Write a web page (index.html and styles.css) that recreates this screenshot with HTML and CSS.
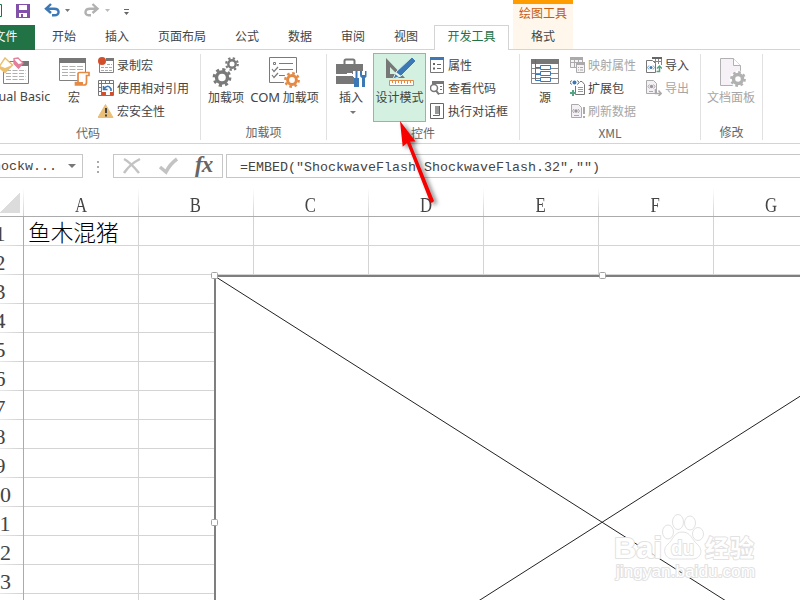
FILE: index.html
```
<!DOCTYPE html>
<html lang="zh-CN">

<head>
    <meta charset="utf-8">
    <meta name="viewport" content="width=device-width, initial-scale=1.0">
    <title>Excel - 开发工具</title>
    <link rel="stylesheet" href="styles.css">
</head>

<body>
    <header class="titlebar">
        <div class="quick">
            <svg width="135" height="25" viewBox="0 0 135 25">
                <path d="M-5 4.5H1.5V16.5H-5" fill="none" stroke="#217346" />
                <path d="M16 4H30V18H16Z" fill="#8250a8" />
                <path d="M19 5h8v5h-8zM19 13h8v4h-8z" fill="#fff" />
                <path d="M21 14h2v3h-2z" fill="#8250a8" />
                <path d="M51 4L46 8.700L51 13M46.500 8.700H54C60 8.700 60 15.300 54.500 15.300H52" fill="none" stroke="#3c78b5" stroke-width="2.400" />
                <path d="M65 9h5l-2.500 3z" fill="#777" />
                <path d="M92.500 4L97.500 8.700L92.500 13M97 8.700H90C84 8.700 84.500 15.300 88.500 15.300H91" fill="none" stroke="#b1b1b1" stroke-width="2.400" />
                <path d="M105 9h5l-2.500 3z" fill="#bbb" />
                <path d="M124 9h5v1h-5zM124 12h5l-2.500 3z" fill="#666" />
            </svg>
        </div>
        <div class="context-title">绘图工具</div>
    </header>

    <nav class="tabs">
        <a class="tab file">文件</a>
        <a class="tab">开始</a>
        <a class="tab">插入</a>
        <a class="tab">页面布局</a>
        <a class="tab">公式</a>
        <a class="tab">数据</a>
        <a class="tab">审阅</a>
        <a class="tab">视图</a>
        <a class="tab active">开发工具</a>
        <a class="tab context">格式</a>
    </nav>

    <section class="ribbon">
        <div class="group code">
            <div class="tools">
                <div class="big vb">
                    <svg width="32" height="32" viewBox="0 0 32 32">
                        <path d="M4.500 4.500H29.500V26.500H4.500Z" fill="#fff" stroke="#808080" />
                        <path d="M22 4h8v5h-8z" fill="#777" />
                        <path d="M7 13.500h20M7 16.500h20M7 19.500h20M7 22.500h20" stroke="#b0b0b0" stroke-dasharray="5 1.500" />
                        <path d="M6 1L13.500 8L6 15.500L0 10Z" fill="#fff" stroke="#eabf70" stroke-width="1.500" />
                        <path d="M0 8.500L6 11L13.500 8L6 16L0 11Z" fill="#eabf70" />
                        <path d="M19 1L24 6L19.500 11L15 6.500V1.500Z" fill="#fff" stroke="#e3809b" stroke-width="1.300" />
                        <path d="M15 2L19.500 7L24 6L19.500 12L15 7Z" fill="#e3809b" />
                    </svg>
                    <span>Visual Basic</span>
                </div>
                <div class="big macro">
                    <svg width="32" height="32" viewBox="0 0 32 32">
                        <path d="M1.500 2.500H27.500V23.500H1.500Z" fill="#fff" stroke="#808080" />
                        <path d="M1 1h27v5H1z" fill="#777" />
                        <path d="M4 9.500h21M4 12.500h21M4 15.500h14M4 18.500h14" stroke="#b0b0b0" stroke-dasharray="6 1.500" />
                        <path d="M20 16.500Q20 15.500 21.500 15.500H31V18.500H28.500V25.500Q28.500 28 26 28H17.500V25.500H20Z" fill="#fff" stroke="#e48a44" stroke-width="1.700" />
                        <path d="M17 25h8v3h-8z" fill="#e48a44" />
                    </svg>
                    <span>宏</span>
                </div>
                <div class="small-col code-col">
                    <div class="small">
                        <svg width="16" height="16" viewBox="0 0 16 16">
                            <path d="M1.500 4V15.500H15.500V1.500H8" fill="none" stroke="#808080" />
                            <path d="M8 1h8v3H8z" fill="#777" />
                            <path d="M3 10.500h11M3 13.500h11M9 7.500h5" stroke="#aaa" stroke-dasharray="3 1" />
                            <circle cx="4" cy="4" r="4" fill="#d24f2b" />
                        </svg>
                        <span>录制宏</span>
                    </div>
                    <div class="small">
                        <svg width="16" height="16" viewBox="0 0 16 16">
                            <path d="M.500 .500H15.500V15.500H.500ZM3.500 0V16M.500 3.500H15.500M7.500 0V4M11.500 0V4M0 7.500H4M0 11.500H4M7.500 12V16" fill="none" stroke="#777" />
                            <path d="M4 12h3v3H4zM12 12h3v3h-3z" fill="#d24f2b" />
                            <path d="M5.500 6V9.500H9.500M6 9Q10 3.500 13 9V11" fill="none" stroke="#3c78b5" stroke-width="1.600" />
                        </svg>
                        <span>使用相对引用</span>
                    </div>
                    <div class="small">
                        <svg width="16" height="16" viewBox="0 0 16 16">
                            <path d="M7.500 1.500L15 14.500H0Z" fill="#eabf77" stroke="#eabf77" />
                            <path d="M7 5h2v5H7zM7 11.500h2v2H7z" fill="#444" />
                        </svg>
                        <span>宏安全性</span>
                    </div>
                </div>
            </div>
            <div class="label">代码</div>
        </div>

        <div class="group addins">
            <div class="tools">
                <div class="big addin">
                    <svg width="32" height="32" viewBox="0 0 32 32">
                        <circle cx="12" cy="20.500" r="5.500" fill="none" stroke="#7a7a7a" stroke-width="3.400" />
                        <circle cx="12" cy="20.500" r="8" fill="none" stroke="#7a7a7a" stroke-width="2.800" stroke-dasharray="3.142 3.142" />
                        <circle cx="22" cy="7" r="3.700" fill="none" stroke="#7a7a7a" stroke-width="2.400" />
                        <circle cx="22" cy="7" r="5.800" fill="none" stroke="#7a7a7a" stroke-width="2.200" stroke-dasharray="2.278 2.278" />
                    </svg>
                    <span>加载项</span>
                </div>
                <div class="big com">
                    <svg width="32" height="32" viewBox="0 0 32 32">
                        <path d="M.500 .500H27.500V25.500H.500Z" fill="#fff" stroke="#7a7a7a" />
                        <path d="M4.500 5.500h2v2h-2zM10 6.500h14M10 12.500h14M10 18.500h6" fill="none" stroke="#7a7a7a" />
                        <path d="M3 12l2 2.500l4-4.500M3 18l2 2.500l4-4.500" fill="none" stroke="#7a7a7a" stroke-width="1.200" />
                        <circle cx="23" cy="23" r="8.500" fill="#fff" />
                        <circle cx="23" cy="23" r="4.400" fill="#fff" stroke="#e48a44" stroke-width="3" />
                        <circle cx="23" cy="23" r="6.700" fill="none" stroke="#e48a44" stroke-width="2.400" stroke-dasharray="2.630 2.630" />
                    </svg>
                    <span><b class="latin">COM</b> 加载项</span>
                </div>
            </div>
            <div class="label">加载项</div>
        </div>

        <div class="group controls">
            <div class="tools">
                <div class="big insert">
                    <svg width="32" height="32" viewBox="0 0 32 32">
                        <path d="M9.500 7V4Q9.500 2.500 11 2.500H18Q19.500 2.500 19.500 4V7" fill="none" stroke="#777" stroke-width="2" />
                        <path d="M1 7H28V17H1ZM1 19H28V27H1Z" fill="#777" />
                        <path d="M12 16h5v3h-5z" fill="#fff" />
                        <path d="M18 14h14v16H19V20h-1z" fill="#fff" />
                        <path d="M20.500 14h2v7h-2zM19 21h5v9h-5z" fill="#3c78b5" />
                        <path d="M25 14V18Q25 20.500 27 21V30H30V21Q32 20.500 31.500 18V14H30V18H27V14Z" fill="#3c78b5" />
                    </svg>
                    <span>插入</span>
                    <i class="caret"></i>
                </div>
                <div class="big design">
                    <svg width="32" height="32" viewBox="0 0 32 32">
                        <path d="M2 1L21 21H2ZM6 10V17H13Z" fill="#777" fill-rule="evenodd" />
                        <path d="M28 0L32 4L17 19L9 22L12 15Z" fill="#3c78b5" stroke="#d3f0e0" />
                        <path d="M12 15L17 19L15 20L11 17Z" fill="#eaf6ef" />
                        <path d="M5.500 23.500H29.500V28.500H5.500Z" fill="#fff" stroke="#e48a44" />
                        <path d="M8.500 24v2M11.500 24v3M14.500 24v2M17.500 24v3M20.500 24v2M23.500 24v3M26.500 24v2" stroke="#e48a44" />
                    </svg>
                    <span>设计模式</span>
                </div>
                <div class="small-col ctl-col">
                    <div class="small">
                        <svg width="16" height="16" viewBox="0 0 16 16">
                            <path d="M.500 .500H13.500V15.500H.500Z" fill="#fff" stroke="#777" />
                            <path d="M0 0h14v3H0z" fill="#3c78b5" />
                            <path d="M3 6h2v2H3zM3 10.500h2v2H3z" fill="#666" />
                            <path d="M7 7.500h4M7 11.500h4" stroke="#666" />
                        </svg>
                        <span>属性</span>
                    </div>
                    <div class="small">
                        <svg width="16" height="16" viewBox="0 0 16 16">
                            <path d="M2.500 4V1.500H13.500V13.500H8" fill="none" stroke="#777" />
                            <path d="M2 1h12v3H2zM10 6h2v1h-2zM10 9h2v1h-2z" fill="#777" />
                            <circle cx="4" cy="8" r="3.500" fill="#fff" stroke="#777" stroke-width="1.500" />
                            <path d="M6 10.500L9 14.500" stroke="#777" stroke-width="2" />
                        </svg>
                        <span>查看代码</span>
                    </div>
                    <div class="small">
                        <svg width="16" height="16" viewBox="0 0 16 16">
                            <path d="M.500 .500H13.500V15.500H.500Z" fill="#fff" stroke="#666" />
                            <path d="M5 3h5v8H5z" fill="#999" />
                            <path d="M3 12.500H9.500V3" fill="none" stroke="#666" />
                        </svg>
                        <span>执行对话框</span>
                    </div>
                </div>
            </div>
            <div class="label">控件</div>
        </div>

        <div class="group xml">
            <div class="tools">
                <div class="big source">
                    <svg width="32" height="32" viewBox="0 0 32 32">
                        <path d="M2.500 2.500H29.500V26.500H2.500ZM2 11.500h28M2 16.500h28M2 21.500h28" fill="#fff" stroke="#888" />
                        <path d="M2 2h28v5H2z" fill="#777" />
                        <path d="M6.500 2V23.500H11M6.500 10.500H11M6.500 17.500H11" fill="none" stroke="#3c78b5" />
                        <path d="M11.500 8.500h10v4h-10zM11.500 14.500h10v4h-10zM11.500 20.500h10v4h-10z" fill="#fff" stroke="#3c78b5" />
                    </svg>
                    <span>源</span>
                </div>
                <div class="small-col xml-col">
                    <div class="small off">
                        <svg width="16" height="16" viewBox="0 0 16 16">
                            <path d="M.500 .500H12.500V10.500H.500ZM.500 5.500H12M4.500 3V10M8.500 3V10" fill="#f5f3f5" stroke="#aaa" />
                            <path d="M0 0h13v3H0z" fill="#aaa" />
                            <path d="M6.500 6.500H14.500V15.500H6.500Z" fill="#f5f3f5" stroke="#aaa" />
                            <path d="M6 5h9v3H6zM8 10h1v1H8zM10 10h3v1h-3zM8 12.500h1v1H8zM10 12.500h3v1h-3z" fill="#aaa" />
                        </svg>
                        <span>映射属性</span>
                    </div>
                    <div class="small">
                        <svg width="16" height="16" viewBox="0 0 16 16">
                            <path d="M10 1.500H12L14.500 4.500V14.500H5.500V6" fill="#fff" stroke="#777" />
                            <path d="M8 7.500h5M8 9.500h5M8 11.500h5" stroke="#999" />
                            <circle cx="4.500" cy="2.500" r="2" fill="#3c78b5" />
                            <path d="M1.500 .500L0 2.500L1.500 4.500M7.500 .500L9 2.500L7.500 4.500" fill="none" stroke="#555" />
                            <path d="M2 10h2v2h2v2H4v2H2v-2H0v-2h2z" fill="#55a584" />
                        </svg>
                        <span>扩展包</span>
                    </div>
                    <div class="small off">
                        <svg width="16" height="16" viewBox="0 0 16 16">
                            <path d="M1.500 1.500H8.500L11.500 4.500V14.500H1.500Z" fill="#f5f0f5" stroke="#aaa" />
                            <circle cx="6" cy="8" r="1.700" fill="#999" />
                            <path d="M4 6L2.500 8L4 10M8 6L9.500 8L8 10M4 12.500h5" fill="none" stroke="#aaa" />
                            <path d="M12 4h3v8h-3z" fill="#fff" />
                            <path d="M13 4h2v7h-2zM13 13h2v2h-2z" fill="#aaa" />
                        </svg>
                        <span>刷新数据</span>
                    </div>
                </div>
                <div class="small-col io-col">
                    <div class="small">
                        <svg width="16" height="16" viewBox="0 0 16 16">
                            <path d="M6.500 .500H15.500V8M7 4.500H15M9.500 2V7M12.500 2V7" fill="none" stroke="#888" />
                            <path d="M6 0h10v2H6z" fill="#666" />
                            <path d="M.500 3.500H6.500L9.500 6.500V15.500H.500Z" fill="#fff" stroke="#777" />
                            <circle cx="5" cy="10.500" r="1.500" fill="#3c78b5" />
                            <path d="M3 8.500L1.500 10.500L3 12.500M7 8.500L8.500 10.500L7 12.500" fill="none" stroke="#7b9fc4" />
                            <path d="M10.500 14.500H13.500V9.500M11 11.500L13.500 9L16 11.500" fill="none" stroke="#55a584" stroke-width="1.500" />
                        </svg>
                        <span>导入</span>
                    </div>
                    <div class="small off">
                        <svg width="16" height="16" viewBox="0 0 16 16">
                            <path d="M.500 .500H7.500L10.500 3.500V13.500H.500Z" fill="#f5f0f5" stroke="#aaa" />
                            <circle cx="5.500" cy="6.500" r="1.700" fill="#999" />
                            <path d="M3.500 4.500L2 6.500L3.500 8.500M7.500 4.500L9 6.500L7.500 8.500M3 11.500h4" fill="none" stroke="#aaa" />
                            <path d="M9.500 9V13.500H15M12.500 10.500L15.200 13.500L12.500 16" fill="none" stroke="#aaa" stroke-width="1.500" />
                        </svg>
                        <span>导出</span>
                    </div>
                </div>
            </div>
            <div class="label">XML</div>
        </div>

        <div class="group modify">
            <div class="tools">
                <div class="big panel off">
                    <svg width="32" height="32" viewBox="0 0 32 32">
                        <path d="M5.500 1.500H18.500L25.500 8.500V28.500H5.500Z" fill="#f6f1f6" stroke="#b1b1b1" />
                        <path d="M18.500 1.500V8.500H25.500" fill="#fff" stroke="#b1b1b1" />
                        <circle cx="23" cy="22" r="8.500" fill="#fff" />
                        <circle cx="23" cy="22" r="4.500" fill="#fff" stroke="#b1b1b1" stroke-width="3.400" />
                        <circle cx="23" cy="22" r="6.800" fill="none" stroke="#b1b1b1" stroke-width="2.200" stroke-dasharray="2.670 2.670" />
                    </svg>
                    <span>文档面板</span>
                </div>
            </div>
            <div class="label">修改</div>
        </div>
    </section>

    <section class="formula-bar">
        <div class="name-box"><span>Shockw...</span><i class="caret"></i></div>
        <div class="dots"><i></i><i></i><i></i></div>
        <div class="fx-box">
            <svg width="70" height="22" viewBox="0 0 70 22">
                <path d="M10 4Q16 7 25 18M26 4Q16 9 10 18" fill="none" stroke="#c3c3c3" stroke-width="2.500" />
                <path d="M46 12L52 17Q56 9 63 4" fill="none" stroke="#c3c3c3" stroke-width="3.500" />
            </svg>
            <em>fx</em>
        </div>
        <div class="formula">=EMBED("ShockwaveFlash.ShockwaveFlash.32","")</div>
    </section>

    <main class="sheet">
        <div class="grid" id="grid">
            <div class="corner"></div>
        </div>

        <!-- Flash control in design mode -->
        <svg class="object" width="590" height="330" viewBox="210 270 590 330">
            <path d="M215 276H989V768H215Z" fill="#fff" stroke="#7f7f7f" stroke-width="2" />
            <path d="M216 277L989 768M989 276L216 768" stroke="#222" stroke-width="1" />
            <g fill="#fff" stroke="#a3a3a3">
                <rect x="211.500" y="272.500" width="6" height="6" rx="1" />
                <rect x="599.500" y="272.500" width="6" height="6" rx="1" />
                <rect x="211.500" y="519.500" width="6" height="6" rx="1" />
            </g>
        </svg>

        <svg class="watermark" width="160" height="80" viewBox="605 508 160 80">
            <g fill="#fff" fill-opacity=".85" stroke="#e2e2e2">
                <ellipse cx="668" cy="532" rx="5.500" ry="7" />
                <ellipse cx="678" cy="522" rx="5.500" ry="7.500" />
                <ellipse cx="690" cy="523" rx="5.500" ry="7" />
                <ellipse cx="698" cy="534" rx="5.500" ry="6.500" />
                <path d="M682 532C674 532 673 540 668 544C661 550 666 560 674 559H692C701 559 704 550 697 544C692 540 691 532 682 532Z" />
            </g>
            <g class="wm-text">
                <text x="614" y="558" font-size="30" textLength="48" lengthAdjust="spacingAndGlyphs" class="wm-bold">Bai</text>
                <text x="671" y="555" font-size="21" textLength="23" lengthAdjust="spacingAndGlyphs" class="wm-bold">du</text>
                <text x="705" y="557" font-size="24" textLength="49" class="wm-bold">经验</text>
                <text x="616" y="577" font-size="16" textLength="139" lengthAdjust="spacingAndGlyphs" class="wm-url">jingyan.baidu.com</text>
            </g>
        </svg>
    </main>

    <svg class="pointer" width="60" height="100" viewBox="390 110 60 100">
        <path d="M400 121L415.500 141.500L410 141.500L434 201Q432 204 430 202L407 143L402.700 146.700Z" fill="#f60000" />
    </svg>

    <script>
        const grid = document.querySelector("#grid");
        const letters = ["A", "B", "C", "D", "E", "F", "G"];

        function addCell(className, text) {
            const cell = document.createElement("div");
            cell.className = className;
            if (text) {
                const span = document.createElement("span");
                span.textContent = text;
                cell.appendChild(span);
            }
            grid.appendChild(cell);
        }

        letters.forEach(letter => addCell("col-head", letter));

        for (let row = 1; row <= 14; row++) {
            addCell("row-head", String(row));
            letters.forEach(letter => {
                addCell("cell", row === 1 && letter === "A" ? "鱼木混猪" : "");
            });
        }

    </script>
</body>

</html>
```
FILE: styles.css
```
* {
    box-sizing: border-box;
}

body {
    margin: 0;
    width: 800px;
    height: 600px;
    overflow: hidden;
    position: relative;
    background-color: #fff;
    color: #444;
    font-family: "Noto Sans CJK SC", sans-serif;
    font-size: 12px;
    line-height: 16px;
}

svg {
    display: block;
    flex: none;
}

.titlebar {
    display: flex;
    height: 25px;
}

.quick {
    width: 513px;
}

.context-title {
    width: 60px;
    border-top: 4px solid #ff9c00;
    background-color: #fff7eb;
    color: #c55a11;
    text-align: center;
    line-height: 17px;
}

/* tabs */
.tabs {
    display: flex;
    height: 25px;
    margin-left: -24px;
    border-bottom: 1px solid #d4d4d4;
}

.tab {
    padding: 0 14.5px;
    height: 24px;
    line-height: 22px;
    white-space: nowrap;
}

.file {
    width: 59px;
    height: 25px;
    margin-right: 2.5px;
    padding: 0;
    text-align: center;
    background-color: #217346;
    color: #fff;
}

.active {
    width: 75px;
    height: 25px;
    margin-left: 1.5px;
    padding: 0;
    text-align: center;
    border: 1px solid #d4d4d4;
    border-bottom: none;
    background-color: #fff;
    color: #217346;
    line-height: 20px;
}

.context {
    width: 60px;
    margin-left: 4px;
    padding: 0;
    text-align: center;
    background-color: #fff7eb;
}

/* ribbon */
.ribbon {
    display: flex;
    height: 94px;
    margin-left: -24px;
    padding-top: 3px;
    border-bottom: 1px solid #d4d4d4;
}

.group {
    flex: none;
    display: flex;
    flex-direction: column;
    height: 86px;
    margin-top: 1px;
    border-right: 1px solid #e1e1e1;
}

.code {
    width: 225px;
}

.addins {
    width: 126px;
}

.controls {
    width: 193px;
}

.xml {
    width: 181px;
}

.modify {
    width: 62px;
}

.tools {
    display: flex;
    height: 69px;
    margin-top: -1px;
}

.label {
    padding-top: 3px;
    text-align: center;
    color: #666;
}

.big {
    display: flex;
    flex-direction: column;
    align-items: center;
    padding-top: 4px;
    white-space: nowrap;
}

.vb {
    width: 78px;
}

.vb span {
    margin-right: -2px;
    font-family: "Noto Sans", sans-serif;
    font-size: 12.5px;
}

.macro {
    width: 40px;
}

.addin {
    width: 50px;
}

.com {
    width: 67px;
}

.latin {
    font-family: "Noto Sans", sans-serif;
    font-size: 13px;
    font-weight: normal;
}

.insert {
    width: 46px;
}

.insert svg {
    margin-left: 2px;
}

.insert span {
    margin-left: 2px;
}

.insert .caret {
    margin: 6px 0 0 6px;
}

.design {
    width: 53px;
    padding-top: 3px;
    border: 1px solid #86bfa0;
    background-color: #d3f0e0;
}

.source {
    width: 50px;
}

.panel {
    width: 60px;
}

.small {
    display: flex;
    align-items: center;
    height: 23px;
    gap: 3px;
    white-space: nowrap;
}

.code-col {
    margin-left: 4px;
}

.ctl-col {
    margin-left: 4px;
}

.ctl-col .small {
    gap: 2px;
}

.xml-col .small {
    gap: 2px;
}

.io-col {
    margin-left: 10px;
}

.off {
    color: #a6a6a6;
}

.caret {
    border: 3px solid transparent;
    border-top: 3px solid #777;
    border-bottom: none;
}

/* formula bar */
.formula-bar {
    display: flex;
    height: 44px;
    padding-top: 10px;
    font-family: "Liberation Mono", monospace;
    font-size: 13.33px;
}

.name-box,
.fx-box,
.formula {
    height: 24px;
    border: 1px solid #c6c6c6;
    line-height: 25px;
}

.name-box {
    display: flex;
    align-items: center;
    width: 99px;
    margin-left: -16px;
}

.name-box span {
    width: 83px;
}

.name-box .caret {
    border-width: 4px 4px 0;
}

.dots {
    display: flex;
    flex-direction: column;
    gap: 3px;
    width: 30px;
    padding: 7px 0 0 14px;
}

.dots i {
    width: 2px;
    height: 2px;
    background-color: #aaa;
}

.fx-box {
    display: flex;
    width: 110px;
    margin-right: 3px;
}

.fx-box em {
    margin-left: 11px;
    font: italic bold 23px/20px "Liberation Serif", serif;
    letter-spacing: -1px;
    color: #666;
}

.formula {
    flex: 1;
    padding-left: 13px;
    border-right: none;
    white-space: nowrap;
}

/* sheet */
.sheet {
    height: 412px;
    overflow: hidden;
}

.grid {
    display: grid;
    grid-template-columns: 47px repeat(7, 115px);
    grid-auto-rows: 29px;
    width: 852px;
    margin-left: -23px;
    font-family: "Liberation Serif", serif;
    font-size: 22px;
    line-height: 31px;
}

.corner {
    border-bottom: 1px solid #ababab;
    background:
        linear-gradient(135deg, transparent 50%, #dcdcdc 50%) 22px 4px / 21px 21px no-repeat,
        linear-gradient(#fff, #d0d0d0) right / 1px 100% no-repeat;
}

.col-head {
    padding-right: 2px;
    text-align: center;
    line-height: 33px;
    border-bottom: 1px solid #ababab;
    background: linear-gradient(#fff, #d0d0d0) right / 1px 100% no-repeat;
}

.col-head span {
    display: inline-block;
    transform: scaleX(.76);
}

.row-head {
    text-align: center;
    line-height: 34px;
    border-right: 1px solid #ababab;
    background: linear-gradient(90deg, #fff, #d0d0d0) bottom / 100% 1px no-repeat;
}

.cell {
    border-right: 1px solid #d4d4d4;
    border-bottom: 1px solid #d4d4d4;
    padding-left: 4px;
    color: #000;
    font-family: "Noto Sans CJK SC", sans-serif;
    font-size: 22.7px;
    font-weight: 300;
    line-height: 30px;
    white-space: nowrap;
}

/* floating things over the sheet */
.object {
    position: absolute;
    left: 210px;
    top: 270px;
}

.watermark {
    position: absolute;
    left: 605px;
    top: 508px;
}

.wm-text {
    fill: #fff;
    stroke: #e2e2e2;
    stroke-width: 2px;
    stroke-linejoin: round;
    paint-order: stroke;
}

.wm-bold {
    font-family: "Liberation Sans", "Noto Sans CJK SC", sans-serif;
    font-weight: bold;
}

.wm-url {
    font-family: "Liberation Sans", sans-serif;
}

.pointer {
    position: absolute;
    left: 390px;
    top: 110px;
    overflow: visible;
    filter: drop-shadow(3px 2px 2px rgba(0, 0, 0, .5));
}
```
